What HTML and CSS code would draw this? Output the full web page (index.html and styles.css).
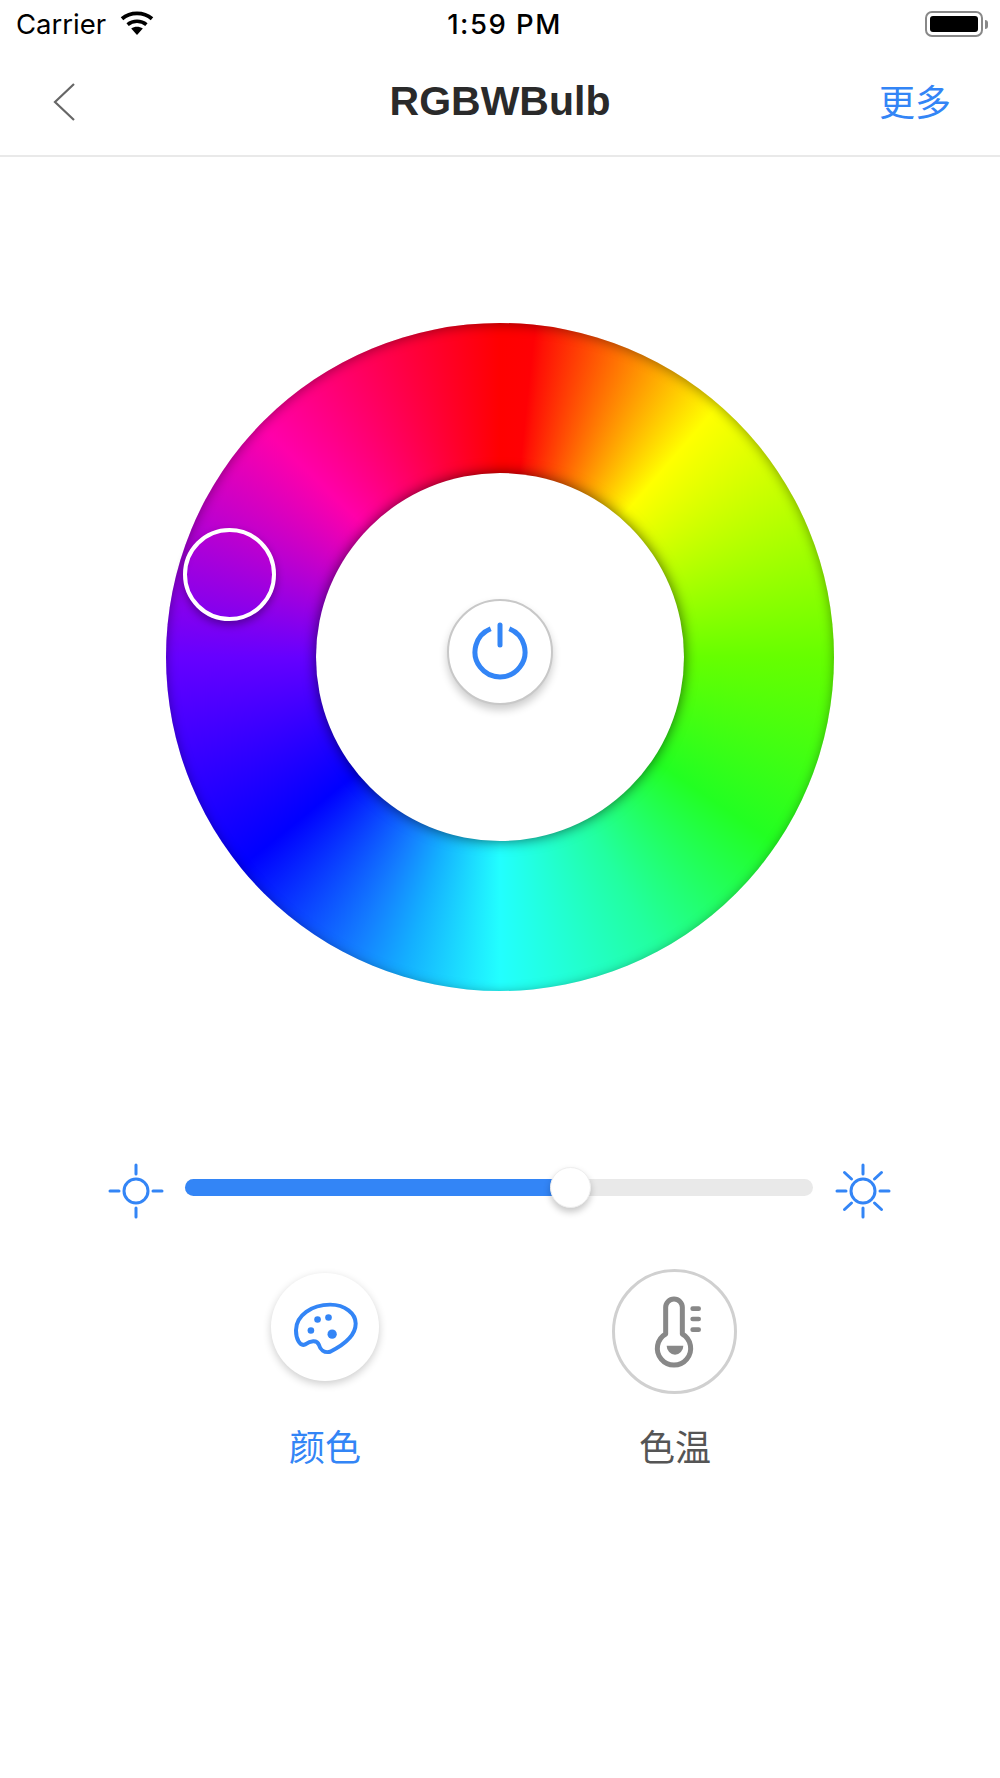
FILE: index.html
```html
<!DOCTYPE html>
<html lang="zh">
<head>
<meta charset="utf-8">
<title>RGBWBulb</title>
<link rel="stylesheet" href="styles.css">
</head>
<body>
<div class="page">
  <header class="header">
    <div class="status">
      <div class="status-left">
        <span class="carrier">Carrier</span>
        <svg class="wifi" viewBox="0 0 34 24" width="34" height="24">
          <path d="M17 24 L11.2 17.6 C14.6 15 19.4 15 22.8 17.6 Z" fill="#000"/>
          <path d="M7.6 13.6 C12.9 9.2 21.1 9.2 26.4 13.6" fill="none" stroke="#000" stroke-width="3.6"/>
          <path d="M2 7.8 C10.4 0.6 23.6 0.6 32 7.8" fill="none" stroke="#000" stroke-width="3.8"/>
        </svg>
      </div>
      <span class="time">1:59 PM</span>
      <div class="status-right">
        <div class="battery"><div class="battery-level"></div></div>
        <div class="battery-cap"></div>
      </div>
    </div>
    <nav class="nav">
      <div class="nav-side">
        <svg class="back" viewBox="0 0 22 38" width="22" height="38">
          <path d="M21 1 L2 19 L21 37" fill="none" stroke="#666" stroke-width="2.2"/>
        </svg>
      </div>
      <h1 class="title">RGBWBulb</h1>
      <div class="nav-side nav-right"><span class="more">更多</span></div>
    </nav>
  </header>

  <main class="main">
    <section class="wheel">
      <div class="wheel-thumb"></div>
      <div class="wheel-hole">
        <button class="power">
          <svg viewBox="0 0 60 60" width="60" height="60">
            <path d="M20.7 6.7 A25 25 0 1 0 39.3 6.7" fill="none" stroke="#3385f6" stroke-width="5"/>
            <path d="M30 3 V23" fill="none" stroke="#3385f6" stroke-width="5" stroke-linecap="round"/>
          </svg>
        </button>
      </div>
    </section>

    <section class="brightness">
      <svg class="sun" viewBox="0 0 56 56" width="56" height="56">
        <g fill="none" stroke="#3385f6" stroke-width="3" stroke-linecap="round">
          <circle cx="28" cy="28" r="12"/>
          <path d="M28 2 V11 M28 45 V54 M2 28 H11 M45 28 H54"/>
        </g>
      </svg>
      <div class="track">
        <div class="track-fill"></div>
        <div class="track-thumb"></div>
      </div>
      <svg class="sun" viewBox="0 0 56 56" width="56" height="56">
        <g fill="none" stroke="#3385f6" stroke-width="3" stroke-linecap="round">
          <circle cx="28" cy="28" r="12"/>
          <path d="M28 2 V11 M28 45 V54 M2 28 H11 M45 28 H54 M9.5 9.5 L16.5 16 M46.5 9.5 L39.5 16 M9.5 46.5 L16.5 40 M46.5 46.5 L39.5 40"/>
        </g>
      </svg>
    </section>

    <section class="modes">
      <div class="mode mode-active">
        <div class="mode-slot">
          <div class="mode-btn mode-btn-active">
            <svg viewBox="125 150 205 170" width="68" height="57">
              <path d="M137 240 C137 195 185 163 240 163 C285 163 317 190 317 220 C317 255 280 285 240 305 C222 310 210 298 206 284 C200 268 180 272 165 283 C148 290 137 265 137 240 Z" fill="none" stroke="#3385f6" stroke-width="12" stroke-linejoin="round"/>
              <g fill="#3385f6">
                <circle cx="202" cy="208" r="10"/>
                <circle cx="235" cy="202" r="10"/>
                <circle cx="182" cy="241" r="10"/>
                <circle cx="246" cy="252" r="14"/>
              </g>
            </svg>
          </div>
        </div>
        <span class="mode-label">颜色</span>
      </div>
      <div class="mode">
        <div class="mode-slot">
          <div class="mode-btn mode-btn-idle">
            <svg viewBox="150 130 165 225" width="55" height="75">
              <path d="M197 250 V170 A25 25 0 0 1 247 170 V250 A50 50 0 1 1 197 250 Z" fill="none" stroke="#888" stroke-width="15" stroke-linejoin="round"/>
              <path d="M200 285 H250 A25 27 0 0 1 200 285 Z" fill="#888"/>
              <path d="M278 174 H296 M278 205 H296 M278 237 H296" fill="none" stroke="#888" stroke-width="14" stroke-linecap="round"/>
            </svg>
          </div>
        </div>
        <span class="mode-label">色温</span>
      </div>
    </section>
  </main>
</div>
</body>
</html>
```
FILE: styles.css
```css
* { box-sizing: border-box; }
html, body { margin: 0; padding: 0; background: #fff; }
.page {
  width: 1000px;
  min-height: 1778px;
  font-family: "Liberation Sans", "Noto Sans CJK SC", sans-serif;
}
.header { border-bottom: 2px solid #e9e9e9; }
.status {
  height: 48px;
  padding: 0 12px 0 16px;
  display: grid;
  grid-template-columns: 1fr auto 1fr;
  align-items: center;
}
.status-left { display: flex; align-items: center; gap: 14px; }
.carrier { font-family: Inter, sans-serif; font-size: 27.5px; color: #000; }
.wifi { margin-top: -2px; }
.time { font-family: Inter, sans-serif; font-size: 27.5px; font-weight: 500; letter-spacing: 1.5px; color: #000; margin-left: 5px; }
.status-right { display: flex; align-items: center; justify-content: flex-end; gap: 2px; }
.battery {
  width: 58px;
  height: 26px;
  padding: 3px;
  border: 2px solid #888;
  border-radius: 7px;
}
.battery-level { height: 100%; background: #000; border-radius: 3px; }
.battery-cap { width: 3px; height: 9px; background: #888; border-radius: 0 3px 3px 0; }

.nav {
  height: 107px;
  padding: 0 49px;
  display: grid;
  grid-template-columns: 1fr auto 1fr;
  align-items: center;
}
.nav-side { display: flex; align-items: center; }
.nav-right { justify-content: flex-end; }
.back { display: block; margin-left: 4px; }
.title { margin: 0; font-size: 41px; font-weight: 700; color: #2a2a2a; }
.more { margin-bottom: 3px; font-size: 36px; color: #3385f6; }

.main { display: flex; flex-direction: column; align-items: center; }
.wheel {
  position: relative;
  width: 668px;
  height: 668px;
  margin-top: 166px;
  border-radius: 50%;
  display: flex;
  align-items: center;
  justify-content: center;
  background: conic-gradient(
    #ff0000 0deg, #ff0004 6deg, #ff1205 8deg, #ffff00 41deg, #66ff00 90deg, #22ff22 124deg,
    #22ffa0 152deg, #22ffff 180deg, #14b0ff 197deg, #1480ff 206deg, #0000ff 231deg,
    #6600ff 270deg, #ff00aa 314deg, #ff0025 350deg, #ff0000 360deg);
  box-shadow: inset 0 2px 12px rgba(0, 0, 0, .36);
}
.wheel-hole {
  width: 368px;
  height: 368px;
  border-radius: 50%;
  background: #fff;
  box-shadow: 0 0 14px rgba(0, 0, 0, .6);
  display: flex;
  align-items: center;
  justify-content: center;
}
.wheel-thumb {
  position: absolute;
  left: 17px;
  top: 205px;
  width: 93px;
  height: 93px;
  border: 4.5px solid #fff;
  border-radius: 50%;
  box-shadow: 0 4px 8px rgba(0, 0, 0, .35);
}
.power {
  width: 106px;
  height: 106px;
  margin-bottom: 10px;
  padding: 0;
  border: 2px solid #c8c8c8;
  border-radius: 50%;
  background: #fff;
  box-shadow: 0 5px 9px rgba(0, 0, 0, .2);
  display: flex;
  align-items: center;
  justify-content: center;
}
.power svg { display: block; margin-top: -1px; }

.brightness {
  width: 784px;
  margin-top: 172px;
  padding-right: 1px;
  display: flex;
  align-items: center;
  gap: 21px;
}
.sun { flex: none; display: block; }
.track {
  position: relative;
  flex: 1;
  height: 17px;
  margin-right: 1px;
  margin-bottom: 7px;
  border-radius: 9px;
  background: #e9e9e9;
}
.track-fill { width: 62%; height: 100%; border-radius: 9px 0 0 9px; background: #3385f6; }
.track-thumb {
  position: absolute;
  left: 365px;
  top: -12px;
  width: 41px;
  height: 41px;
  border: 1px solid #eee;
  border-radius: 50%;
  background: #fff;
  box-shadow: 0 4px 7px rgba(0, 0, 0, .22);
}

.modes { margin-top: 50px; display: flex; justify-content: center; }
.mode { width: 350px; display: flex; flex-direction: column; align-items: center; }
.mode-slot { height: 125px; display: flex; align-items: center; justify-content: center; }
.mode-btn { border-radius: 50%; display: flex; align-items: center; justify-content: center; background: #fff; }
.mode-btn svg { display: block; }
.mode-btn-active {
  width: 108px;
  height: 108px;
  margin-bottom: 9px;
  box-shadow: 0 3px 8px rgba(0, 0, 0, .2);
}
.mode-btn-active svg { margin: 2px 0 0 2px; }
.mode-btn-idle { width: 125px; height: 125px; margin-right: 2px; border: 3px solid #d0d0d0; }
.mode-btn-idle svg { margin-left: 6px; }
.mode-label { margin-top: 30px; height: 50px; line-height: 50px; font-size: 36px; color: #555; }
.mode-active .mode-label { color: #3385f6; }
```
